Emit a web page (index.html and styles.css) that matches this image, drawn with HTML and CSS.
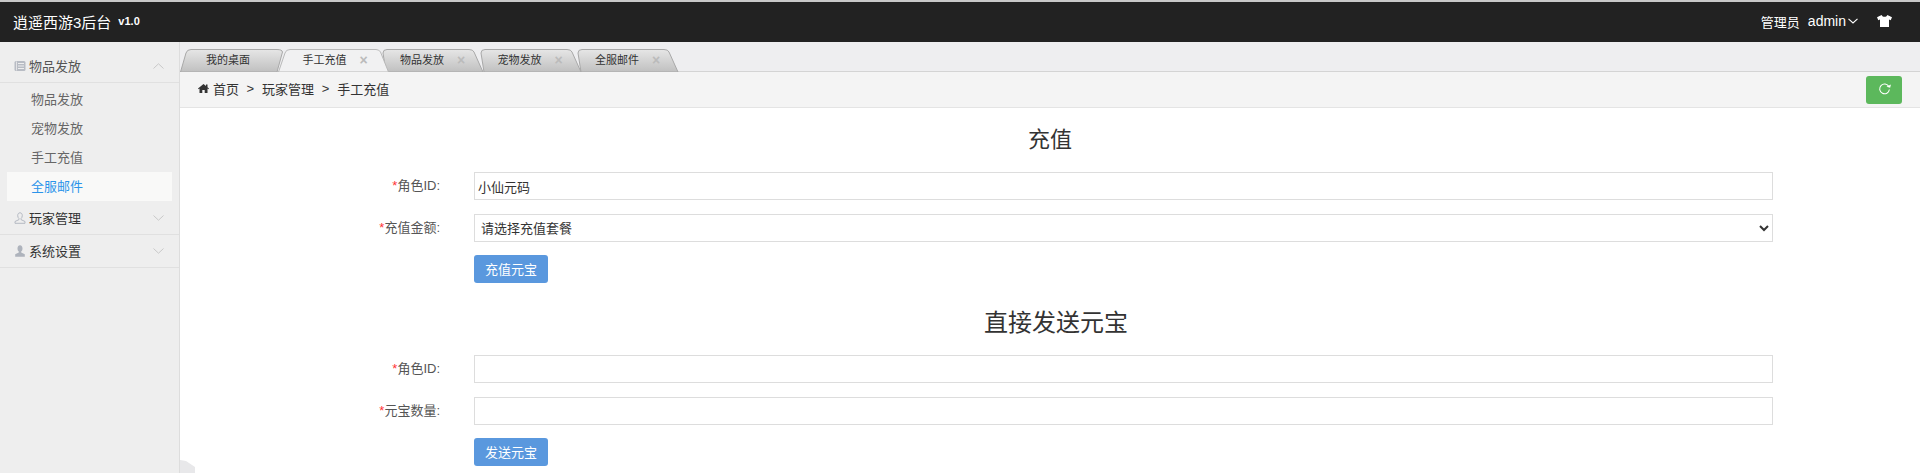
FILE: index.html
```html
<!DOCTYPE html>
<html lang="zh">
<head>
<meta charset="utf-8">
<title>逍遥西游3后台</title>
<link rel="stylesheet" href="styles.css">
</head>
<body>
<header class="topbar">
  <div class="brand"><span class="brand-name">逍遥西游3后台</span><span class="brand-ver">v1.0</span></div>
  <div class="userbox">
    <span class="role">管理员</span>
    <span class="uname">admin</span>
    <svg class="uchev" viewBox="0 0 10 6"><path d="M.5.8 5 5 9.500.8" fill="none" stroke="#fff" stroke-width="1.100"/></svg>
    <svg class="shirt" viewBox="0 0 15 12"><path d="M4.600 0 0 2.200 1.300 5.200 3 4.500V12H12V4.500L13.700 5.200 15 2.200 10.400 0C9.800 1.300 8.800 1.800 7.500 1.800S5.200 1.300 4.600 0Z" fill="#fff"/></svg>
  </div>
</header>
<div class="layout">
  <aside class="sidebar">
    <section class="menu menu-first">
      <div class="menu-head">
        <svg class="mi" viewBox="0 0 12 11"><rect x=".5" y=".5" width="11" height="10" rx="1.500" fill="#b8bcc4"/><path d="M4 3H10M4 5.500H10M4 8H10" stroke="#eee" stroke-width="1"/><path d="M2.500 1V10" stroke="#eee" stroke-width=".8"/></svg>
        <span class="menu-title muted">物品发放</span>
        <svg class="chev" viewBox="0 0 11 6"><path d="M.5 5.500 5.500.8 10.500 5.500" fill="none" stroke="#c8c8c8" stroke-width="1"/></svg>
      </div>
      <ul class="sub">
        <li>物品发放</li>
        <li>宠物发放</li>
        <li>手工充值</li>
        <li class="on">全服邮件</li>
      </ul>
    </section>
    <section class="menu">
      <div class="menu-head">
        <svg class="mi" viewBox="0 0 12 12"><path d="M6 .8C4.500.8 3.700 2 3.700 3.600 3.700 5 4.300 6 5 6.600V7.600L1 9.500V11.300H11V9.500L7 7.600V6.600C7.700 6 8.300 5 8.300 3.600 8.300 2 7.500.8 6 .8Z" fill="none" stroke="#b4b9c2" stroke-width="1"/></svg>
        <span class="menu-title">玩家管理</span>
        <svg class="chev" viewBox="0 0 11 6"><path d="M.5.5 5.500 5.200 10.500.5" fill="none" stroke="#c8c8c8" stroke-width="1"/></svg>
      </div>
    </section>
    <section class="menu">
      <div class="menu-head">
        <svg class="mi" viewBox="0 0 12 12"><path d="M6 .3C4.300.3 3.500 1.700 3.500 3.400 3.500 4.900 4.100 5.900 4.800 6.500V7.400L1.200 9.200V11.700H10.800V9.200L7.200 7.400V6.500C7.900 5.900 8.500 4.900 8.500 3.400 8.500 1.700 7.700.3 6 .3Z" fill="#aeb3bc"/></svg>
        <span class="menu-title">系统设置</span>
        <svg class="chev" viewBox="0 0 11 6"><path d="M.5.5 5.500 5.200 10.500.5" fill="none" stroke="#c8c8c8" stroke-width="1"/></svg>
      </div>
    </section>
  </aside>
  <main class="main">
    <nav class="tabs">
      <div class="tab tab-first">
        <svg class="tab-shape" viewBox="0 0 104 23"><path d="M.5 23 6 4Q7 .5 11 .5H97Q102 .5 102.500 3L97 23Z" fill="url(#g1)" stroke="#a8a8a8"/><defs><linearGradient id="g1" x1="0" y1="0" x2="0" y2="1"><stop offset="0" stop-color="#e6e6e6"/><stop offset="1" stop-color="#c0c0c0"/></linearGradient></defs></svg>
        <span class="tab-label">我的桌面</span>
      </div>
      <div class="tab tab-active">
        <svg class="tab-shape wide" viewBox="0 0 112 23"><path d="M.5 23 7 4Q8 .5 12 .5H98Q101 .5 102.500 3L110.500 23Z" fill="#f1f1f2" stroke="#b9b9b9"/></svg>
        <span class="tab-label">手工充值</span><span class="tab-x">×</span>
      </div>
      <div class="tab">
        <svg class="tab-shape wide" viewBox="0 0 112 23"><path d="M11 23 8 4Q8 .5 12 .5H94Q98 .5 99 3L108 23Z" fill="url(#g1)" stroke="#a8a8a8"/></svg>
        <span class="tab-label">物品发放</span><span class="tab-x">×</span>
      </div>
      <div class="tab">
        <svg class="tab-shape wide" viewBox="0 0 112 23"><path d="M11 23 8 4Q8 .5 12 .5H94Q98 .5 99 3L108 23Z" fill="url(#g1)" stroke="#a8a8a8"/></svg>
        <span class="tab-label">宠物发放</span><span class="tab-x">×</span>
      </div>
      <div class="tab">
        <svg class="tab-shape wide" viewBox="0 0 112 23"><path d="M11 23 8 4Q8 .5 12 .5H94Q98 .5 99 3L108 23Z" fill="url(#g1)" stroke="#a8a8a8"/></svg>
        <span class="tab-label">全服邮件</span><span class="tab-x">×</span>
      </div>
    </nav>
    <div class="crumbs">
      <svg class="home" viewBox="0 0 11 9"><path d="M5.500 0 0 4.500 .6 5.200 1.500 4.500V9H4.300V6H6.700V9H9.500V4.500L10.400 5.200 11 4.500 9.500 3.300V.6H8V2L5.500 0Z" fill="#333"/></svg>
      <span>首页</span><span class="sep">&gt;</span><span>玩家管理</span><span class="sep">&gt;</span><span>手工充值</span>
      <button class="refresh" type="button" aria-label="刷新"><svg viewBox="0 0 12 12"><path d="M10 3.300A4.500 4.500 0 1 0 10.500 6" fill="none" stroke="#fff" stroke-width="1"/><path d="M8 4H11.500V1Z" fill="#fff" transform="rotate(15 10 3)"/></svg></button>
    </div>
    <div class="content">
      <h3 class="title first">充值</h3>
      <form class="form">
        <div class="row"><label class="lbl"><em>*</em>角色ID:</label><input class="ctl" type="text" value="小仙元码"></div>
        <div class="row"><label class="lbl"><em>*</em>充值金额:</label><select class="ctl sel"><option>请选择充值套餐</option></select></div>
        <div class="row actions"><button class="btn" type="button">充值元宝</button></div>
      </form>
      <h3 class="title">直接发送元宝</h3>
      <form class="form">
        <div class="row"><label class="lbl"><em>*</em>角色ID:</label><input class="ctl" type="text"></div>
        <div class="row"><label class="lbl"><em>*</em>元宝数量:</label><input class="ctl" type="text"></div>
        <div class="row actions"><button class="btn" type="button">发送元宝</button></div>
      </form>
    </div>
    <div class="corner"></div>
  </main>
</div>
</body>
</html>
```
FILE: styles.css
```css
* { box-sizing: border-box; }
html, body { margin: 0; padding: 0; height: 473px; overflow: hidden; }
body { font-family: "Liberation Sans", "Noto Sans CJK SC", sans-serif; font-size: 13px; color: #333; background: #fff; display: flex; flex-direction: column; }

.topbar { height: 42px; flex: none; border-top: 2px solid #c8c8c8; background: #222; color: #fff; display: flex; align-items: center; justify-content: space-between; padding: 0 28px 0 13px; }
.brand { display: flex; align-items: center; margin-top: -2px; }
.brand-name { font-size: 15px; }
.brand-ver { font-size: 11px; font-weight: bold; margin-left: 7px; margin-top: -1px; }
.userbox { display: flex; align-items: center; margin-top: -2px; }
.role { font-size: 13px; }
.uname { font-size: 14px; margin-left: 8px; }
.uchev { width: 10px; height: 6px; margin-left: 2px; }
.shirt { width: 15px; height: 12px; margin-left: 19px; }

.layout { flex: 1; display: flex; min-height: 0; }
.sidebar { width: 180px; flex: none; background: #eee; border-right: 1px solid #ddd; }
.menu { border-bottom: 1px solid #e0e0e0; }
.menu-first { padding-top: 8px; border-bottom: 0; }
.menu-head { height: 33px; display: flex; align-items: center; padding: 0 15px 0 14px; border-bottom: 1px solid #e0e0e0; }
.menu + .menu .menu-head { border-bottom: 0; height: 32px; }
.mi { width: 12px; height: 12px; flex: none; }
.menu-title { margin-left: 3px; margin-bottom: 2px; flex: 1; color: #333; }
.menu-title.muted { color: #555; }
.chev { width: 11px; height: 6px; flex: none; }
.sub { list-style: none; margin: 0; padding: 2px 7px 1px; }
.sub li { height: 29px; line-height: 29px; padding-left: 24px; color: #666; }
.sub li.on { color: #2b94ea; background: #f9f9f8; }

.main { flex: 1; min-width: 0; position: relative; display: flex; flex-direction: column; }
.tabs { height: 30px; flex: none; background: #eeeef0; border-bottom: 1px solid #d4d4d4; padding-top: 7px; display: flex; }
.tab { width: 97.5px; height: 23px; flex: none; position: relative; font-size: 11px; line-height: 22px; color: #333; }
.tab-active { z-index: 2; }
.tab-shape { position: absolute; left: 0; top: 0; width: 104px; height: 23px; }
.tab-shape.wide { width: 112px; }
.tab-label { position: relative; margin-left: 25px; }
.tab-first .tab-label { margin-left: 26px; }
.tab-x { position: absolute; left: 80px; top: 0; width: 12px; text-align: center; color: #bbb; font-size: 14px; font-weight: bold; }

.crumbs { height: 36px; flex: none; background: #f4f4f4; border-bottom: 1px solid #e4e4e4; display: flex; align-items: center; padding: 0 18px 2px 18px; color: #333; }
.home { width: 11px; height: 9px; margin-right: 4px; }
.sep { margin: 0 8px 0 7.5px; font-family: "Liberation Sans", sans-serif; }
.refresh { margin-left: auto; margin-top: 2px; width: 36px; height: 28px; border: 0; border-radius: 3px; background: #5cb85c; display: flex; align-items: center; justify-content: center; padding: 0; }
.refresh svg { width: 13px; height: 13px; }

.content { flex: 1; padding-top: 14px; overflow: hidden; }
.title { margin: 21px 0 17px; padding-left: 12px; height: 34px; line-height: 38px; font-size: 24px; font-weight: normal; text-align: center; color: #333; }
.title.first { margin: 0 0 16px; padding-left: 0; font-size: 22px; line-height: 36px; }
.form { display: block; }
.row { display: flex; align-items: center; height: 28px; margin-bottom: 14px; padding-right: 147px; }
.row:last-child { margin-bottom: 0; margin-top: -1px; }
.lbl { width: 260px; flex: none; text-align: right; color: #555; margin-bottom: 4px; }
.lbl em { color: #f33; font-style: normal; }
.ctl { flex: 1; height: 28px; margin-left: 34px; border: 1px solid #ddd; background: #fff; font: inherit; color: #333; padding: 0 3px; border-radius: 0; outline: 0; min-width: 0; }
.sel { padding: 0 2px; }
.actions { padding-left: 294px; }
.btn { width: 74px; height: 28px; border: 0; border-radius: 3px; background: #5a98de; color: #fff; font: inherit; padding: 0 0 2px; }

.corner { position: absolute; left: 0; bottom: 0; width: 15px; height: 13px; background: #e8e8ea; clip-path: polygon(0 0, 6px 1px, 15px 7px, 15px 13px, 0 13px); }
```
